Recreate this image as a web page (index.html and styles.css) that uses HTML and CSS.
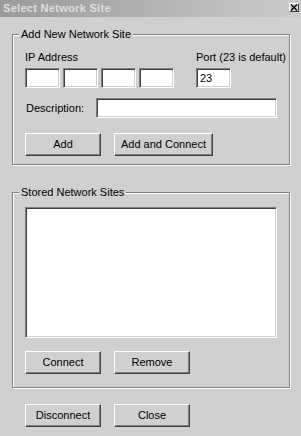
FILE: index.html
```html
<!DOCTYPE html>
<html>
<head>
<meta charset="utf-8">
<title>Select Network Site</title>
<link rel="stylesheet" href="styles.css">
</head>
<body>
<div class="window">
  <div class="titlebar">
    <span class="title">Select Network Site</span>
    <span class="close-btn">
      <svg width="8" height="7" viewBox="0 0 8 7"><path d="M1 0.5 L7 6.5 M7 0.5 L1 6.5" stroke="#000" stroke-width="1.4" fill="none"/></svg>
    </span>
  </div>
  <div class="content">
    <div class="group group-add">
      <span class="legend">Add New Network Site</span>
      <div class="row-ip">
        <div class="col-ip">
          <div class="label">IP Address</div>
          <div class="ip-inputs">
            <div class="field ip"></div>
            <div class="field ip"></div>
            <div class="field ip"></div>
            <div class="field ip"></div>
          </div>
        </div>
        <div class="col-port">
          <div class="label">Port (23 is default)</div>
          <div class="field port">23</div>
        </div>
      </div>
      <div class="row-desc">
        <span class="label desc-label">Description:</span>
        <div class="field desc"></div>
      </div>
      <div class="btn-row">
        <div class="btn">Add</div>
        <div class="btn btn-wide">Add and Connect</div>
      </div>
    </div>
    <div class="group group-stored">
      <span class="legend">Stored Network Sites</span>
      <div class="field listbox"></div>
      <div class="btn-row">
        <div class="btn">Connect</div>
        <div class="btn">Remove</div>
      </div>
    </div>
    <div class="btn-row bottom-row">
      <div class="btn">Disconnect</div>
      <div class="btn">Close</div>
    </div>
  </div>
</div>
</body>
</html>
```

FILE: styles.css
```css
html, body {
  margin: 0;
  padding: 0;
  background: #d0d0d0;
}
.window {
  width: 301px;
  height: 436px;
  background: #d0d0d0;
  font-family: "Liberation Sans", Arial, sans-serif;
  font-size: 11px;
  line-height: 13px;
  color: #000;
  overflow: hidden;
}
.titlebar {
  height: 17px;
  display: flex;
  align-items: center;
  justify-content: space-between;
  padding: 0 2px 0 3px;
  background: linear-gradient(to right, #9a9a9a, #cbcbcb);
}
.title {
  font-weight: bold;
  color: #dedede;
  letter-spacing: 0.3px;
  white-space: nowrap;
}
.close-btn {
  width: 10px;
  height: 9px;
  margin-top: -3px;
  box-sizing: border-box;
  border: 1px solid;
  border-color: #fff #404040 #404040 #fff;
  background: #d0d0d0;
  display: flex;
  align-items: center;
  justify-content: center;
}
.close-btn svg { display: block; }
.content {
  padding: 0 11px 0 12px;
}
.group {
  position: relative;
  border: 1px solid #808080;
  box-shadow: 1px 1px 0 #fff, inset 1px 1px 0 #fff;
  padding: 0 12px;
}
.group-add {
  margin-top: 17px;
  padding-top: 16px;
  padding-bottom: 8px;
}
.group-stored {
  margin-top: 27px;
  padding-top: 14px;
  padding-bottom: 13px;
}
.legend {
  position: absolute;
  top: -7px;
  left: 6px;
  padding: 0 2px;
  background: #d0d0d0;
  white-space: nowrap;
}
.label { white-space: nowrap; }
.row-ip {
  display: flex;
}
.col-ip .label { margin-bottom: 4px; }
.col-port { margin-left: 22px; }
.col-port .label { margin-bottom: 4px; }
.ip-inputs {
  display: flex;
  gap: 3px;
}
.field {
  box-sizing: border-box;
  background: #fff;
  border: 1px solid;
  border-color: #808080 #fff #fff #808080;
  box-shadow: inset 1px 1px 0 #404040, inset -1px -1px 0 #d0d0d0;
  height: 20px;
}
.ip { width: 35px; }
.port {
  width: 35px;
  padding: 3px 0 0 3px;
}
.row-desc {
  display: flex;
  align-items: center;
  margin-top: 10px;
}
.desc-label {
  width: 71px;
  padding-left: 1px;
  box-sizing: border-box;
}
.desc { flex: 1; }
.btn-row {
  display: flex;
  gap: 13px;
  margin-top: 15px;
}
.group-stored .btn-row { margin-top: 13px; }
.bottom-row {
  margin-top: 16px;
  padding-left: 13px;
}
.btn {
  box-sizing: border-box;
  width: 76px;
  height: 23px;
  border: 1px solid;
  border-color: #fff #404040 #404040 #fff;
  box-shadow: inset -1px -1px 0 #808080;
  background: #d0d0d0;
  display: flex;
  align-items: center;
  justify-content: center;
  white-space: nowrap;
}
.btn-wide { width: 99px; }
.listbox {
  height: 131px;
}
```
